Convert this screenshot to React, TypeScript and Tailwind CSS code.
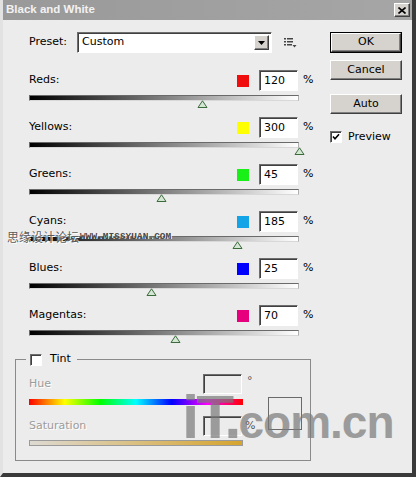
import React from "react";

type Channel = { name: string; swatch: string; value: number };

const channels: Channel[] = [
  { name: "Reds", swatch: "bg-[#f00d0d]", value: 120 },
  { name: "Yellows", swatch: "bg-[#ffff00]", value: 300 },
  { name: "Greens", swatch: "bg-[#18f018]", value: 45 },
  { name: "Cyans", swatch: "bg-[#12a4e6]", value: 185 },
  { name: "Blues", swatch: "bg-[#0000ff]", value: 25 },
  { name: "Magentas", swatch: "bg-[#e6007e]", value: 70 },
];

const sunken =
  "border border-t-[#6e6e6e] border-l-[#6e6e6e] border-b-white border-r-white shadow-[inset_1px_1px_0_#404040]";
const raised =
  "border border-t-white border-l-white border-b-[#404040] border-r-[#404040] shadow-[inset_-1px_-1px_0_#808080] bg-[#d6d3ce]";

function Thumb({ value }: { value: number }) {
  const x = ((value + 200) / 500) * 269;
  return (
    <svg
      className="absolute top-full"
      style={{ left: x - 5.5 }}
      width="11"
      height="8"
      viewBox="0 0 11 8"
    >
      <polygon points="5.5,0.8 10,7.5 1,7.5" fill="#d3e6d3" stroke="#3b6b3b" strokeWidth="1" />
    </svg>
  );
}

function ChannelRow({ c }: { c: Channel }) {
  return (
    <div className="h-[47px]">
      <div className="flex h-[21px] items-center">
        <span className="flex-1">{c.name}:</span>
        <span className={`h-[12px] w-[12px] ${c.swatch}`} />
        <div className={`ml-[10px] h-[21px] w-[39px] bg-white pl-[4px] leading-[19px] ${sunken}`}>
          {c.value}
        </div>
        <span className="ml-[5px] w-[12px]">%</span>
      </div>
      <div className="relative mt-[4px] h-[6px] w-[270px] border border-t-[#6a6a6a] border-l-[#6a6a6a] border-b-[#d8d8d8] border-r-[#b0b0b0] bg-[linear-gradient(to_right,#000,#fff)]">
        <Thumb value={c.value} />
      </div>
    </div>
  );
}

function TitleBar() {
  return (
    <div className="flex h-[20px] items-center justify-between bg-[linear-gradient(to_right,#999999,#a6a6a6)] pl-[3px] pr-[2px]">
      <span className="font-['Liberation_Sans',sans-serif] text-[11.5px] font-bold text-[#f2f2f2]">
        Black and White
      </span>
      <div className={`flex h-[14px] w-[16px] items-center justify-center ${raised}`}>
        <svg width="8" height="7" viewBox="0 0 8 7">
          <path d="M0.5 0.5 L7.5 6.5 M7.5 0.5 L0.5 6.5" stroke="#000" strokeWidth="1.6" />
        </svg>
      </div>
    </div>
  );
}

function ListIcon() {
  return (
    <svg width="13" height="10" viewBox="0 0 13 10" className="ml-[12px]">
      <rect x="0" y="0" width="2" height="1.5" fill="#444" />
      <rect x="3" y="0" width="6" height="1.5" fill="#444" />
      <rect x="0" y="3" width="2" height="1.5" fill="#444" />
      <rect x="3" y="3" width="6" height="1.5" fill="#444" />
      <rect x="0" y="6" width="2" height="1.5" fill="#444" />
      <rect x="3" y="6" width="5" height="1.5" fill="#444" />
      <polygon points="8.5,7 12.5,7 10.5,9.5" fill="#444" />
    </svg>
  );
}

function LeftCol() {
  return (
    <div className="w-[286px]">
      <div className="flex h-[21px] items-center">
        <span className="w-[48px]">Preset:</span>
        <div className={`flex h-[21px] w-[195px] items-center justify-between bg-white pl-[4px] pr-[2px] ${sunken}`}>
          <span>Custom</span>
          <div className={`flex h-[15px] w-[15px] items-center justify-center ${raised}`}>
            <svg width="7" height="4" viewBox="0 0 7 4">
              <polygon points="0,0 7,0 3.5,4" fill="#000" />
            </svg>
          </div>
        </div>
        <ListIcon />
      </div>
      <div className="mt-[17px]">
        {channels.map((c) => (
          <ChannelRow key={c.name} c={c} />
        ))}
      </div>
    </div>
  );
}

function RightCol() {
  return (
    <div className="ml-[15px] flex w-[72px] flex-col">
      <div className="h-[21px] border border-black">
        <div className={`flex h-full items-center justify-center ${raised}`}>OK</div>
      </div>
      <div className={`mt-[7px] flex h-[20px] items-center justify-center ${raised}`}>Cancel</div>
      <div className={`mt-[14px] flex h-[20px] items-center justify-center ${raised}`}>Auto</div>
      <div className="mt-[15px] flex items-center">
        <div className={`flex h-[12px] w-[12px] items-center justify-center bg-white ${sunken}`}>
          <svg width="8" height="8" viewBox="0 0 8 8">
            <path d="M1 3.5 L3 5.8 L7 1.2" stroke="#000" strokeWidth="1.6" fill="none" />
          </svg>
        </div>
        <span className="ml-[6px]">Preview</span>
      </div>
    </div>
  );
}

function Tint() {
  return (
    <fieldset className="ml-[12px] mt-[1px] w-[296px] border border-[#8a8a8a] pb-[14px]">
      <legend className="ml-[10px] flex h-[13px] items-center pl-[4px] pr-[6px]">
        <div className={`h-[12px] w-[12px] bg-white ${sunken}`} />
        <span className="ml-[8px]">Tint</span>
      </legend>
      <div className="mt-[8px] flex items-start pl-[13px]">
        <div className="w-[237px]">
          <div className="flex h-[20px] items-center">
            <span className="flex-1 text-[#9c9c9c] [text-shadow:1px_1px_0_#ffffff]">Hue</span>
            <div className={`h-[20px] w-[39px] bg-[#ececec] ${sunken}`} />
            <span className="h-[20px] w-[24px] pl-[5px] leading-[14px] text-[#555]">°</span>
          </div>
          <div className="mt-[5px] h-[6px] w-[214px] bg-[linear-gradient(to_right,#ff0000,#ffff00,#00ff00,#00ffff,#0000ff,#ff00ff,#ff0000)]" />
          <div className="mt-[11px] flex h-[20px] items-center">
            <span className="flex-1 text-[#9c9c9c] [text-shadow:1px_1px_0_#ffffff]">Saturation</span>
            <div className={`h-[20px] w-[39px] bg-[#ececec] ${sunken}`} />
            <span className="w-[24px] pl-[3px] text-[#555]">%</span>
          </div>
          <div className="mt-[4px] h-[6px] w-[214px] border border-[#9a9a9a] bg-[linear-gradient(to_right,#dedad2,#d6a42e)]" />
        </div>
        <div className="ml-[2px] mt-[23px] h-[33px] w-[34px] border border-[#6a6a6a]" />
      </div>
    </fieldset>
  );
}

function Watermarks() {
  return (
    <>
      <div className="pointer-events-none absolute left-[7px] top-[229px] flex items-center">
        <span className="font-['Noto_Sans_CJK_SC',sans-serif] text-[12px] leading-[16px] text-[#5a5a5a] [text-shadow:0_0_1px_#fff,1px_1px_0_#fff]">
          思缘设计论坛
        </span>
        <span className="ml-[1px] font-['Liberation_Mono',monospace] text-[9.5px] font-bold leading-[10px] text-[#4a4a4a] [text-shadow:1px_0_0_#fff]">
          WWW.MISSYUAN.COM
        </span>
      </div>
      <div className="pointer-events-none absolute left-[182px] top-[382px] flex items-baseline font-['Liberation_Sans',sans-serif] font-bold text-[#7a7a7a] opacity-70">
        <span className="text-[62px] leading-[70px] tracking-[-3px]">iT.</span>
        <span className="text-[46px] leading-[70px] tracking-[-1px]">com.cn</span>
      </div>
    </>
  );
}

export default function App() {
  return (
    <div className="relative h-[477px] w-[416px] overflow-hidden font-['DejaVu_Sans',sans-serif] text-[11px] text-black">
      <div className="flex h-full w-full flex-col border-b-[4px] border-l-[3px] border-r-[4px] border-b-[#3a3a3a] border-l-[#e2e2e2] border-r-[#3a3a3a] bg-[#ececec]">
        <TitleBar />
        <div className="flex flex-1 flex-col">
          <div className="flex pl-[26px] pt-[12px]">
            <LeftCol />
            <RightCol />
          </div>
          <Tint />
        </div>
      </div>
      <Watermarks />
    </div>
  );
}
